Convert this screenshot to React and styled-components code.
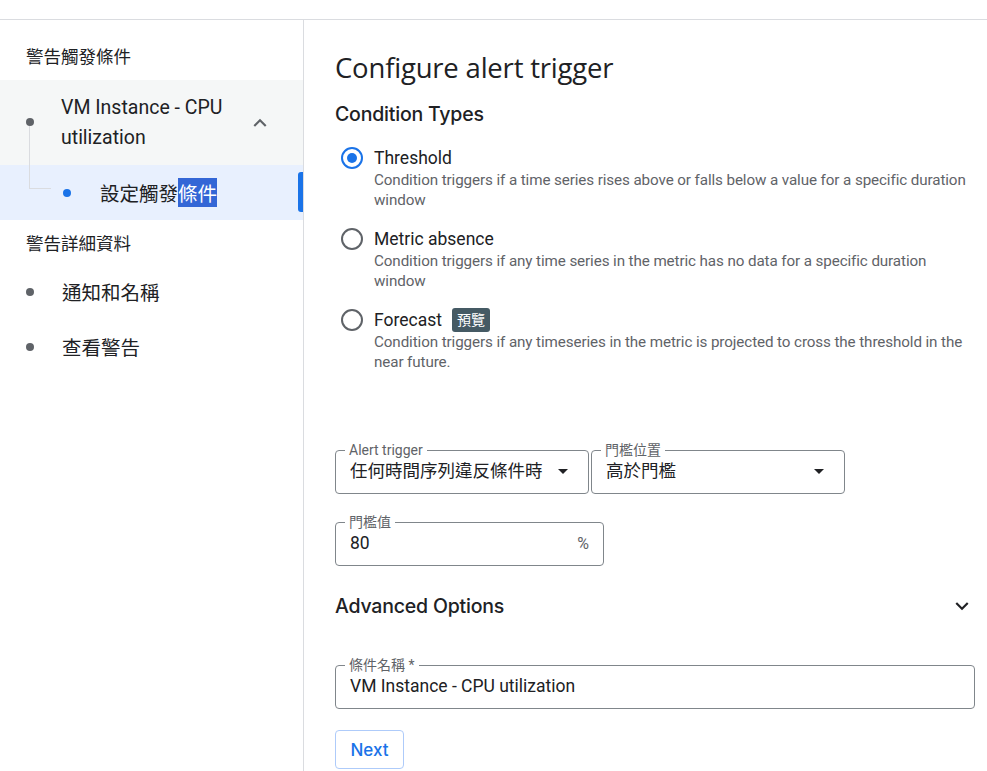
import React from "react";
import styled, { createGlobalStyle } from "styled-components";

const GlobalStyle = createGlobalStyle`
  html, body {
    margin: 0;
    padding: 0;
    background: #fff;
  }
  body {
    font-family: Roboto, "Noto Sans CJK TC", "Noto Sans", sans-serif;
    color: #202124;
  }
`;

const Page = styled.div`
  width: 987px;
  height: 771px;
  overflow: hidden;
  padding-top: 19px;
  box-sizing: border-box;
`;

const Frame = styled.div`
  display: grid;
  grid-template-columns: 304px 1fr;
  border-top: 1px solid #dadce0;
  height: 752px;
`;

const Sidebar = styled.nav`
  border-right: 1px solid #dadce0;
  display: flex;
  flex-direction: column;
`;

const SectionLabel = styled.div`
  height: 44px;
  padding-top: ${(p) => p.top || 0}px;
  padding-bottom: ${(p) => p.bottom || 0}px;
  display: flex;
  align-items: center;
  padding-left: 26px;
  font-size: 17.5px;
  color: #202124;
`;

const Expanded = styled.div`
  position: relative;
  height: 85px;
  background: #f5f7f7;
  display: flex;
  align-items: center;
  padding-left: 61px;
  padding-right: 30px;
  font-size: 19.5px;
  line-height: 30px;

  &::before {
    content: "";
    position: absolute;
    left: 26px;
    top: 38px;
    width: 8px;
    height: 8px;
    border-radius: 50%;
    background: #5f6368;
  }
  &::after {
    content: "";
    position: absolute;
    left: 29px;
    top: 46px;
    width: 21px;
    height: 62px;
    border-left: 1px solid #dadce0;
    border-bottom: 1px solid #dadce0;
    z-index: 1;
  }
`;

const ExpandedText = styled.div`
  flex: 1;
  font-family: Roboto, sans-serif;
`;

const StepRow = styled.div`
  position: relative;
  height: 55px;
  display: flex;
  align-items: center;
  background: ${(p) => (p.active ? "#e8f0fe" : "transparent")};
  padding-left: ${(p) => p.indent}px;
  font-size: 19.5px;
  color: #202124;
`;

const Dot = styled.span`
  width: 8px;
  height: 8px;
  border-radius: 50%;
  background: ${(p) => p.color};
  margin-right: ${(p) => p.gap}px;
  flex: none;
`;

const ActiveBar = styled.span`
  position: absolute;
  right: 0;
  top: 7px;
  width: 5px;
  height: 40px;
  border-radius: 3px 0 0 3px;
  background: #1a73e8;
`;

const Selection = styled.span`
  background: #3366d6;
  color: #fff;
`;

const Main = styled.main`
  padding: 30px 12px 0 31px;
  display: flex;
  flex-direction: column;
`;

const Title = styled.h1`
  margin: 0;
  font-size: 27.5px;
  line-height: 36px;
  font-weight: 400;
  font-family: "Open Sans", Roboto, sans-serif;
  letter-spacing: -0.2px;
`;

const SubTitle = styled.h2`
  margin: 14px 0 0;
  font-size: 19.5px;
  line-height: 28px;
  font-weight: 500;
  font-family: Inter, Roboto, sans-serif;
  letter-spacing: -0.2px;
`;

const Options = styled.div`
  margin-top: 18px;
  display: flex;
  flex-direction: column;
  gap: 17px;
`;

const Option = styled.label`
  display: grid;
  grid-template-columns: 39px 1fr;
`;

const RadioCol = styled.div`
  padding-left: 6px;
  padding-top: 1px;
`;

const Radio = styled.span`
  display: flex;
  align-items: center;
  justify-content: center;
  width: 22px;
  height: 22px;
  box-sizing: border-box;
  border-radius: 50%;
  border: 2px solid ${(p) => (p.checked ? "#1a73e8" : "#5f6368")};

  &::after {
    content: "";
    width: 10px;
    height: 10px;
    border-radius: 50%;
    background: ${(p) => (p.checked ? "#1a73e8" : "transparent")};
  }
`;

const OptionTitle = styled.div`
  display: flex;
  align-items: center;
  gap: 10px;
  font-size: 17.5px;
  line-height: 24px;
  color: #202124;
`;

const Badge = styled.span`
  background: #455a64;
  color: #fff;
  font-size: 14px;
  line-height: 24px;
  padding: 0 5px;
  border-radius: 3px;
`;

const OptionDesc = styled.div`
  font-size: 15.2px;
  line-height: 20px;
  color: #5f6368;
  letter-spacing: -0.1px;
`;

const FieldRow = styled.div`
  display: flex;
  gap: 2px;
  margin-top: ${(p) => p.mt}px;
`;

const Field = styled.fieldset`
  margin: 0;
  box-sizing: border-box;
  width: ${(p) => p.w || "auto"};
  flex: ${(p) => (p.w ? "none" : "1")};
  border: 1px solid #80868b;
  border-radius: 4px;
  padding: 0 14px 0 14px;
  height: 52px;
  display: flex;
  align-items: center;
  gap: 8px;
`;

const Legend = styled.legend`
  font-size: 14px;
  line-height: 16px;
  color: #5f6368;
  padding: 0 4px;
  margin-left: -5px;
`;

const Value = styled.span`
  flex: 1;
  font-size: 17.5px;
  line-height: 24px;
  color: #202124;
  white-space: nowrap;
  margin-top: -9px;
`;

const Suffix = styled.span`
  font-size: 16px;
  color: #5f6368;
  margin-top: -9px;
`;

const Caret = styled.svg`
  width: 24px;
  height: 24px;
  flex: none;
  margin-top: -9px;
  margin-right: -1px;
`;

const AdvancedRow = styled.div`
  margin-top: 26px;
  display: flex;
  align-items: center;
  justify-content: space-between;
  height: 28px;
`;

const AdvancedTitle = styled.span`
  font-size: 19.5px;
  font-weight: 500;
  font-family: Inter, Roboto, sans-serif;
  letter-spacing: -0.2px;
`;

const Icon = styled.svg`
  width: ${(p) => p.size || 24}px;
  height: ${(p) => p.size || 24}px;
  fill: ${(p) => p.color || "#5f6368"};
  flex: none;
`;

const NextButton = styled.button`
  margin-top: 21px;
  align-self: flex-start;
  width: 69px;
  height: 39px;
  border: 1px solid #aecbfa;
  border-radius: 4px;
  background: #fff;
  color: #1a73e8;
  font-family: Inter, Roboto, sans-serif;
  font-size: 17px;
  font-weight: 500;
`;

const options = [
  {
    title: "Threshold",
    desc: "Condition triggers if a time series rises above or falls below a value for a specific duration window",
    checked: true,
  },
  {
    title: "Metric absence",
    desc: "Condition triggers if any time series in the metric has no data for a specific duration window",
  },
  {
    title: "Forecast",
    badge: "預覽",
    desc: "Condition triggers if any timeseries in the metric is projected to cross the threshold in the near future.",
  },
];

function DropCaret() {
  return (
    <Caret viewBox="0 0 24 24" fill="#202124">
      <path d="M7 10l5 5 5-5z" />
    </Caret>
  );
}

function App() {
  return (
    <Page>
      <GlobalStyle />
      <Frame>
        <Sidebar>
          <SectionLabel top={13} bottom={3}>警告觸發條件</SectionLabel>
          <Expanded>
            <ExpandedText>VM Instance - CPU utilization</ExpandedText>
            <Icon viewBox="0 0 24 24" size={26}>
              <path d="M7.41 15.41L12 10.83l4.59 4.58L18 14l-6-6-6 6z" />
            </Icon>
          </Expanded>
          <StepRow active indent={63}>
            <Dot color="#1a73e8" gap={29} />
            設定觸發<Selection>條件</Selection>
            <ActiveBar />
          </StepRow>
          <SectionLabel>警告詳細資料</SectionLabel>
          <StepRow indent={26}>
            <Dot color="#5f6368" gap={28} />
            通知和名稱
          </StepRow>
          <StepRow indent={26}>
            <Dot color="#5f6368" gap={28} />
            查看警告
          </StepRow>
        </Sidebar>

        <Main>
          <Title>Configure alert trigger</Title>
          <SubTitle>Condition Types</SubTitle>
          <Options>
            {options.map((o) => (
              <Option key={o.title}>
                <RadioCol>
                  <Radio checked={o.checked} />
                </RadioCol>
                <div>
                  <OptionTitle>
                    {o.title}
                    {o.badge && <Badge>{o.badge}</Badge>}
                  </OptionTitle>
                  <OptionDesc>{o.desc}</OptionDesc>
                </div>
              </Option>
            ))}
          </Options>

          <FieldRow mt={70}>
            <Field w="254px">
              <Legend>Alert trigger</Legend>
              <Value>任何時間序列違反條件時</Value>
              <DropCaret />
            </Field>
            <Field w="254px">
              <Legend>門檻位置</Legend>
              <Value>高於門檻</Value>
              <DropCaret />
            </Field>
          </FieldRow>

          <FieldRow mt={20}>
            <Field w="269px">
              <Legend>門檻值</Legend>
              <Value>80</Value>
              <Suffix>%</Suffix>
            </Field>
          </FieldRow>

          <AdvancedRow>
            <AdvancedTitle>Advanced Options</AdvancedTitle>
            <Icon viewBox="0 0 24 24" size={26} color="#202124">
              <path d="M16.59 8.59L12 13.17 7.41 8.59 6 10l6 6 6-6z" />
            </Icon>
          </AdvancedRow>

          <FieldRow mt={37}>
            <Field>
              <Legend>條件名稱 *</Legend>
              <Value>VM Instance - CPU utilization</Value>
            </Field>
          </FieldRow>

          <NextButton>Next</NextButton>
        </Main>
      </Frame>
    </Page>
  );
}

export default App;
